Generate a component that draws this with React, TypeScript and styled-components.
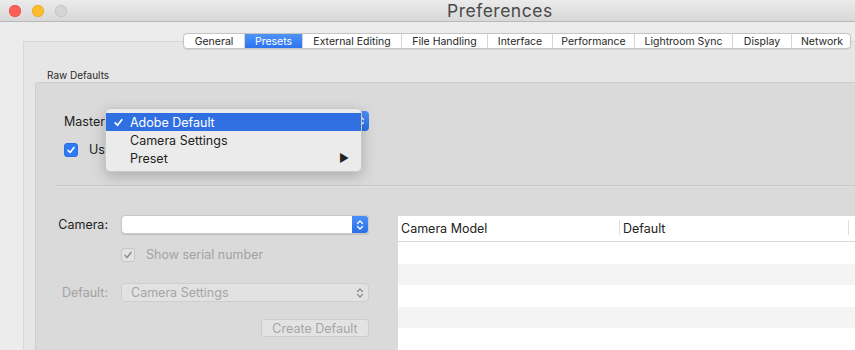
import React from "react";
import styled, { createGlobalStyle } from "styled-components";

const GlobalStyle = createGlobalStyle`
  html, body {
    margin: 0;
    padding: 0;
    background: #ececec;
    overflow: hidden;
  }
  body {
    font-family: Inter, "Liberation Sans", sans-serif;
    -webkit-font-smoothing: antialiased;
  }
`;

const Window = styled.div`
  width: 855px;
  height: 350px;
  overflow: hidden;
  background: #ececec;
  display: flex;
  flex-direction: column;
`;

const TitleBar = styled.div`
  height: 21px;
  flex-shrink: 0;
  display: flex;
  align-items: center;
  background: linear-gradient(#ebebeb, #d8d8d8);
  border-bottom: 1px solid #b9b9b9;
`;

const Lights = styled.div`
  display: flex;
  gap: 11px;
  padding-left: 9px;
  width: 80px;
`;

const Light = styled.span<{ $color: string; $edge: string }>`
  width: 12px;
  height: 12px;
  border-radius: 50%;
  background: ${(p) => p.$color};
  box-shadow: inset 0 0 0 0.5px ${(p) => p.$edge};
`;

const Title = styled.div`
  margin-left: 358px;
  font-size: 17.5px;
  color: #4a4a4a;
  letter-spacing: 0.5px;
`;

const Body = styled.div`
  flex: 1;
  display: flex;
  flex-direction: column;
`;

const TabsRow = styled.div`
  padding: 11px 0 0 183px;
  position: relative;
  z-index: 2;
  margin-bottom: -8px;
`;

const Segmented = styled.div`
  display: flex;
  height: 16px;
  width: 668px;
  background: #fff;
  border: 1px solid #c5c5c5;
  border-radius: 4px;
  box-sizing: border-box;
  overflow: hidden;
  box-shadow: 0 0.5px 1px rgba(0, 0, 0, 0.08);
`;

const Tab = styled.div<{ $w: number; $active?: boolean }>`
  width: ${(p) => p.$w}px;
  flex-shrink: 0;
  box-sizing: border-box;
  display: flex;
  align-items: center;
  justify-content: center;
  font-size: 10.5px;
  color: ${(p) => (p.$active ? "#fff" : "#262626")};
  background: ${(p) =>
    p.$active ? "linear-gradient(#4f93f8, #2c73f1)" : "transparent"};
  & + & {
    border-left: 1px solid ${(p) => (p.$active ? "#2c73f1" : "#d6d6d6")};
  }
`;

const TabView = styled.div`
  flex: 1;
  margin-left: 23px;
  background: #e6e6e6;
  border-top: 1px solid #d6d6d6;
  border-left: 1px solid #d8d8d8;
  padding: 0 0 0 11px;
  display: flex;
  flex-direction: column;
`;

const GroupLabel = styled.div`
  font-size: 10px;
  color: #2a2a2a;
  padding: 27px 0 1px 12px;
`;

const GroupBox = styled.div`
  flex: 1;
  position: relative;
  background: #dadada;
  border-top: 1px solid #cdcdcd;
  border-left: 1px solid #cdcdcd;
  border-top-left-radius: 4px;
  display: flex;
  flex-direction: column;
`;

const TopSection = styled.div`
  padding: 28px 0 0 28px;
  display: flex;
  flex-direction: column;
  gap: 11px;
`;

const Row = styled.div`
  display: flex;
  align-items: center;
  gap: 8px;
  font-size: 12.5px;
  color: #222;
`;

const RowLabel = styled.span`
  width: 49px;
  flex-shrink: 0;
  white-space: nowrap;
`;

const MasterPopup = styled.div`
  width: 248px;
  height: 20px;
  border-radius: 4px;
  background: linear-gradient(#4a8ff8, #2a6fe6);
  display: flex;
  justify-content: flex-end;
  align-items: center;
`;

const Checkbox = styled.span<{ $disabled?: boolean }>`
  width: 14px;
  height: 14px;
  flex-shrink: 0;
  box-sizing: border-box;
  border-radius: 3px;
  display: inline-flex;
  align-items: center;
  justify-content: center;
  background: ${(p) => (p.$disabled ? "#e3e3e3" : "#2f7bf5")};
  border: 1px solid ${(p) => (p.$disabled ? "#c6c6c6" : "#2a6fe0")};
`;

const CheckLabel = styled.span<{ $disabled?: boolean }>`
  margin-left: 3px;
  color: ${(p) => (p.$disabled ? "#a3a3a3" : "#222")};
  font-size: 12.5px;
  white-space: nowrap;
`;

const Separator = styled.div`
  margin: 28px 0 0 19px;
  height: 1px;
  background: #c6c6c6;
  border-bottom: 1px solid #e2e2e2;
`;

const LowerSection = styled.div`
  flex: 1;
  display: flex;
  padding-top: 28px;
`;

const Form = styled.div`
  width: 333px;
  flex-shrink: 0;
  display: grid;
  grid-template-columns: 72px 248px;
  column-gap: 13px;
  grid-auto-rows: min-content;
  align-content: start;
`;

const Label = styled.div<{ $disabled?: boolean }>`
  font-size: 12.5px;
  text-align: right;
  align-self: center;
  color: ${(p) => (p.$disabled ? "#a3a3a3" : "#1d1d1d")};
`;

const Popup = styled.div<{ $disabled?: boolean }>`
  height: 19px;
  box-sizing: border-box;
  border-radius: 4px;
  display: flex;
  align-items: center;
  font-size: 12.5px;
  padding-left: 9px;
  color: #a5a5a5;
  background: ${(p) => (p.$disabled ? "#e2e2e2" : "#fff")};
  border: 1px solid ${(p) => (p.$disabled ? "#cecece" : "#c9c9c9")};
  box-shadow: ${(p) =>
    p.$disabled ? "none" : "0 0.5px 1px rgba(0,0,0,0.12)"};
`;

const Stepper = styled.span<{ $blue?: boolean }>`
  margin-left: auto;
  width: 16px;
  height: 100%;
  display: flex;
  align-items: center;
  justify-content: center;
  border-radius: 0 3px 3px 0;
  background: ${(p) => (p.$blue ? "linear-gradient(#4a8ff8, #2a6fe6)" : "none")};
`;

const SerialRow = styled.div`
  grid-column: 2;
  display: flex;
  align-items: center;
  gap: 8px;
  margin: 13px 0 21px;
`;

const ButtonRow = styled.div`
  grid-column: 2;
  display: flex;
  justify-content: flex-end;
  margin-top: 17px;
`;

const Button = styled.div`
  width: 108px;
  height: 18px;
  box-sizing: border-box;
  border-radius: 3px;
  background: #e3e3e3;
  border: 1px solid #cdcdcd;
  font-size: 12.5px;
  color: #a6a6a6;
  display: flex;
  align-items: center;
  justify-content: center;
`;

const Table = styled.div`
  margin: 1px 0 0 29px;
  flex: 1;
  background: #fff;
  display: flex;
  flex-direction: column;
`;

const HeaderRow = styled.div`
  height: 26px;
  flex-shrink: 0;
  display: flex;
  border-bottom: 1px solid #d8d8d8;
  box-sizing: border-box;
`;

const HeaderCell = styled.div<{ $w: number }>`
  width: ${(p) => p.$w}px;
  flex-shrink: 0;
  padding-left: 3px;
  font-size: 12.5px;
  color: #222;
  display: flex;
  align-items: center;
  box-sizing: border-box;
  position: relative;
  &::after {
    content: "";
    position: absolute;
    right: 0;
    top: 4px;
    bottom: 6px;
    width: 1px;
    background: #dedede;
  }
`;

const TableRow = styled.div<{ $alt?: boolean }>`
  height: 21.5px;
  flex-shrink: 0;
  background: ${(p) => (p.$alt ? "#f4f4f4" : "#fff")};
`;

const Menu = styled.div`
  position: absolute;
  left: 69px;
  top: 25px;
  width: 257px;
  padding: 4px 0;
  background: #ebebeb;
  border: 1px solid #c9c9c9;
  border-radius: 5px;
  box-shadow: 0 4px 14px rgba(0, 0, 0, 0.22);
  box-sizing: border-box;
  z-index: 5;
`;

const MenuItem = styled.div<{ $selected?: boolean }>`
  height: 18px;
  display: flex;
  align-items: center;
  padding: 0 12px 0 7px;
  font-size: 12.5px;
  color: ${(p) => (p.$selected ? "#fff" : "#222")};
  background: ${(p) => (p.$selected ? "#2f6fe2" : "transparent")};
`;

const CheckMark = styled.span`
  width: 17px;
  display: flex;
  align-items: center;
`;

const Arrow = styled.span`
  margin-left: auto;
  font-size: 11px;
  color: #222;
`;

const tabs = [
  { name: "General", w: 60 },
  { name: "Presets", w: 58, active: true },
  { name: "External Editing", w: 99 },
  { name: "File Handling", w: 86 },
  { name: "Interface", w: 65 },
  { name: "Performance", w: 82 },
  { name: "Lightroom Sync", w: 98 },
  { name: "Display", w: 59 },
  { name: "Network", w: 61 },
];

const Chevrons = ({ color }: { color: string }) => (
  <svg width="8" height="12" viewBox="0 0 8 12">
    <path
      d="M1.5 4.5 L4 2 L6.5 4.5 M1.5 7.5 L4 10 L6.5 7.5"
      fill="none"
      stroke={color}
      strokeWidth="1.3"
      strokeLinecap="round"
      strokeLinejoin="round"
    />
  </svg>
);

const Tick = ({ color, size = 10 }: { color: string; size?: number }) => (
  <svg width={size} height={size} viewBox="0 0 10 10">
    <path
      d="M2 5.3 L4.1 7.5 L8 2.5"
      fill="none"
      stroke={color}
      strokeWidth="1.6"
      strokeLinecap="round"
      strokeLinejoin="round"
    />
  </svg>
);

export default function App() {
  return (
    <>
      <GlobalStyle />
      <Window>
        <TitleBar>
          <Lights>
            <Light $color="#fc5f57" $edge="#de4a42" />
            <Light $color="#fdbc2e" $edge="#dea123" />
            <Light $color="#d4d4d4" $edge="#bcbcbc" />
          </Lights>
          <Title>Preferences</Title>
        </TitleBar>
        <Body>
          <TabsRow>
            <Segmented>
              {tabs.map((t) => (
                <Tab key={t.name} $w={t.w} $active={t.active}>
                  {t.name}
                </Tab>
              ))}
            </Segmented>
          </TabsRow>
          <TabView>
            <GroupLabel>Raw Defaults</GroupLabel>
            <GroupBox>
              <TopSection>
                <Row>
                  <RowLabel>Master</RowLabel>
                  <MasterPopup>
                    <Stepper>
                      <Chevrons color="#fff" />
                    </Stepper>
                  </MasterPopup>
                </Row>
                <Row>
                  <Checkbox>
                    <Tick color="#fff" />
                  </Checkbox>
                  <CheckLabel>Use</CheckLabel>
                </Row>
              </TopSection>
              <Separator />
              <LowerSection>
                <Form>
                  <Label>Camera:</Label>
                  <Popup>
                    <Stepper $blue>
                      <Chevrons color="#fff" />
                    </Stepper>
                  </Popup>
                  <SerialRow>
                    <Checkbox $disabled>
                      <Tick color="#8f8f8f" />
                    </Checkbox>
                    <CheckLabel $disabled>Show serial number</CheckLabel>
                  </SerialRow>
                  <Label $disabled>Default:</Label>
                  <Popup $disabled>
                    Camera Settings
                    <Stepper>
                      <Chevrons color="#8a8a8a" />
                    </Stepper>
                  </Popup>
                  <ButtonRow>
                    <Button>Create Default</Button>
                  </ButtonRow>
                </Form>
                <Table>
                  <HeaderRow>
                    <HeaderCell $w={222}>Camera Model</HeaderCell>
                    <HeaderCell $w={229}>Default</HeaderCell>
                  </HeaderRow>
                  <TableRow />
                  <TableRow $alt />
                  <TableRow />
                  <TableRow $alt />
                  <TableRow />
                </Table>
              </LowerSection>
              <Menu>
                <MenuItem $selected>
                  <CheckMark>
                    <Tick color="#fff" size={11} />
                  </CheckMark>
                  Adobe Default
                </MenuItem>
                <MenuItem>
                  <CheckMark />
                  Camera Settings
                </MenuItem>
                <MenuItem>
                  <CheckMark />
                  Preset
                  <Arrow>▶</Arrow>
                </MenuItem>
              </Menu>
            </GroupBox>
          </TabView>
        </Body>
      </Window>
    </>
  );
}
